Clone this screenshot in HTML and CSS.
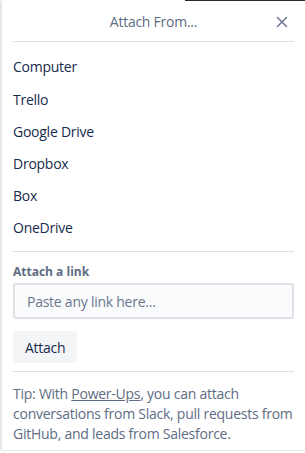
FILE: index.html
```html
<!DOCTYPE html>
<html lang="en">
<head>
    <meta charset="UTF-8">
    <meta name="viewport" content="width=device-width, initial-scale=1.0">
    <title>Attach From...</title>
    <link rel="stylesheet" href="styles.css">
</head>
<body>
    <div class="top-strip"></div>
    <div class="popover">
        <div class="pop-header">
            <span class="pop-title">Attach From...</span>
            <a class="pop-close" href="#" aria-label="Close">
                <svg width="12" height="12" viewBox="0 0 12 12">
                    <path d="M1.5 1.5 L10.5 10.5 M10.5 1.5 L1.5 10.5" stroke="#6b778c" stroke-width="1.5" stroke-linecap="round"/>
                </svg>
            </a>
        </div>

        <div class="pop-content">
            <ul class="source-list">
                <li><a href="#">Computer</a></li>
                <li><a href="#">Trello</a></li>
                <li><a href="#">Google Drive</a></li>
                <li><a href="#">Dropbox</a></li>
                <li><a href="#">Box</a></li>
                <li><a href="#">OneDrive</a></li>
            </ul>

            <hr class="divider">

            <label class="link-label" for="link-input">Attach a link</label>
            <input class="link-input" id="link-input" type="text" placeholder="Paste any link here...">
            <button class="attach-btn" type="button">Attach</button>

            <hr class="divider">

            <p class="tip">Tip: With <a href="#">Power-Ups</a>, you can attach conversations from Slack, pull requests from GitHub, and leads from Salesforce.</p>
        </div>
    </div>
</body>
</html>
```

FILE: styles.css
```css
body {
    margin: 0;
    background: #fff;
    font-family: "Open Sans", "Noto Sans", sans-serif;
    font-size: 14px;
    letter-spacing: -0.25px;
    color: #172b4d;
}

.top-strip {
    position: absolute;
    top: 0;
    left: 185px;
    right: 0;
    height: 1px;
    background: #2b2b2b;
}

.popover {
    height: 451px;
    border-left: 2px solid #e4e6ea;
    border-bottom: 1px solid #e4e6ea;
    border-radius: 3px;
    box-sizing: border-box;
}

.pop-header {
    position: relative;
    height: 41px;
    margin: 0 11px;
    border-bottom: 1px solid #dfe1e6;
    text-align: center;
}

.pop-title {
    display: block;
    line-height: 44px;
    color: #5e6c84;
    font-size: 14px;
}

.pop-close {
    position: absolute;
    right: 6px;
    top: 16px;
    width: 12px;
    height: 12px;
}

.pop-close svg {
    display: block;
}

.pop-content {
    padding: 0 11px;
}

.source-list {
    list-style: none;
    margin: 0;
    padding: 9px 0 3px;
}

.source-list li a {
    display: block;
    padding: 6px 0;
    line-height: 20px;
    color: #172b4d;
    text-decoration: none;
}

.source-list li:first-child a {
    padding-bottom: 7px;
}

.divider {
    border: 0;
    border-top: 1px solid #dfe1e6;
    margin: 4px 0 12px;
}

.link-label {
    display: block;
    font-size: 12px;
    font-weight: bold;
    color: #5e6c84;
    line-height: 16px;
    margin: 0 0 3px;
    letter-spacing: 0;
}

.link-input {
    display: block;
    width: 100%;
    box-sizing: border-box;
    height: 36px;
    padding: 8px 12px;
    background: #fafbfc;
    border: 2px solid #dfe1e6;
    border-radius: 3px;
    font-family: inherit;
    font-size: 14px;
    letter-spacing: -0.25px;
    color: #172b4d;
    margin-bottom: 12px;
}

.link-input::placeholder {
    color: #6b778c;
}

.attach-btn {
    display: block;
    height: 32px;
    padding: 0 12px;
    background: #f4f5f7;
    border: 0;
    border-radius: 3px;
    font-family: inherit;
    font-size: 14px;
    letter-spacing: -0.25px;
    color: #172b4d;
    margin-bottom: 8px;
}

.tip {
    margin: 0;
    font-size: 14px;
    line-height: 20px;
    color: #5e6c84;
}

.tip a {
    color: #5e6c84;
}
```
